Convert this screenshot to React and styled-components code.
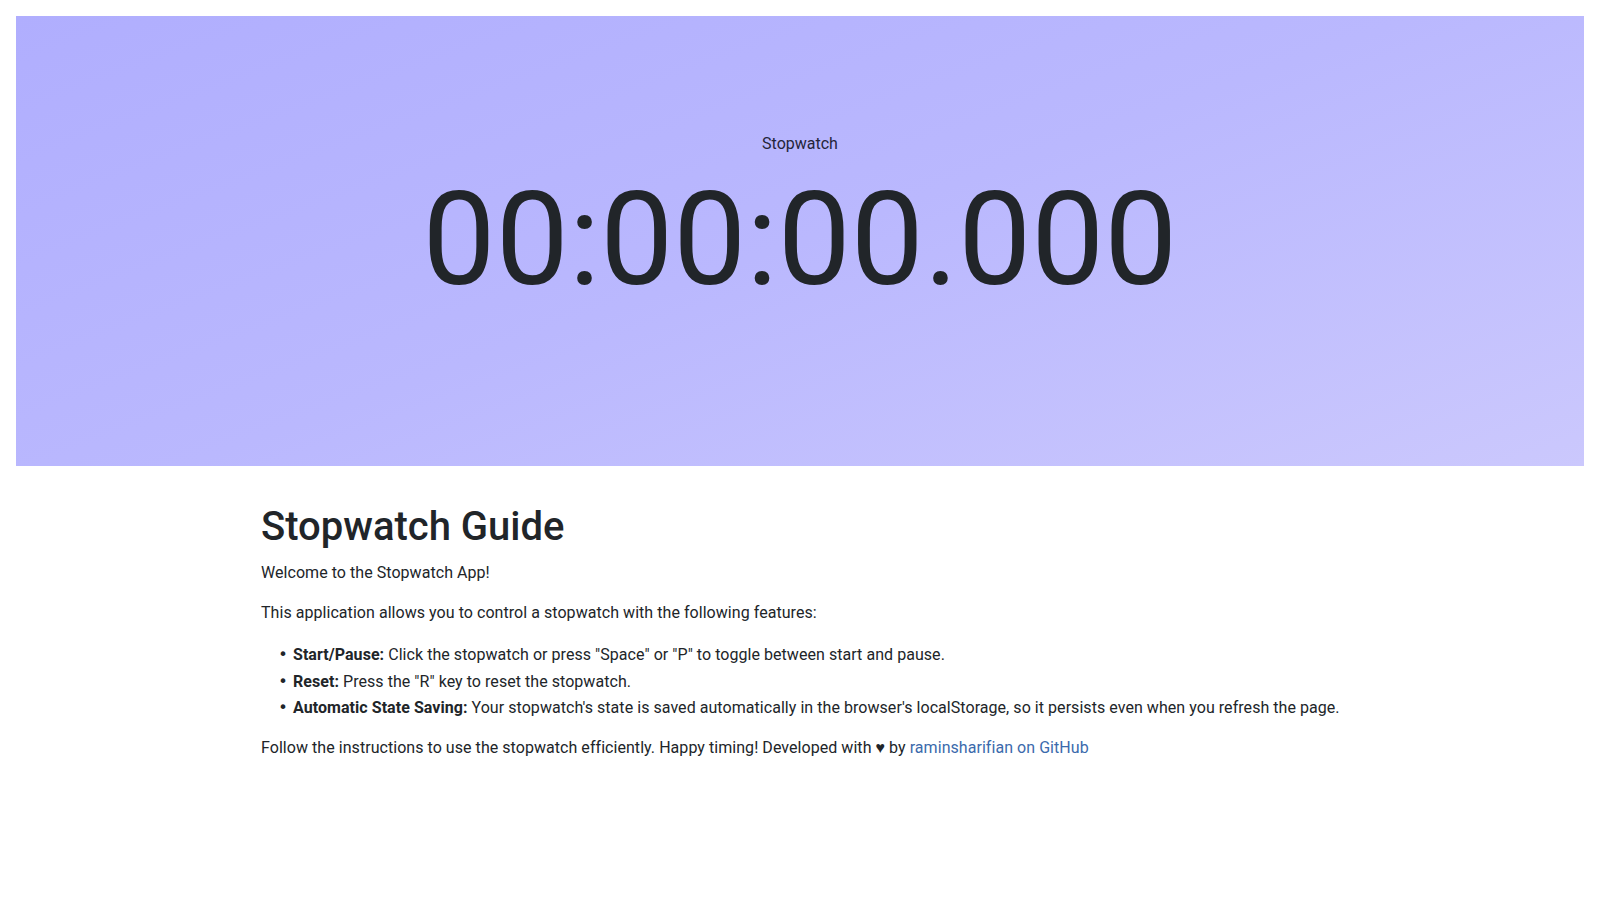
import React from 'react';
import styled, { createGlobalStyle } from 'styled-components';

const GlobalStyle = createGlobalStyle`
  * {
    box-sizing: border-box;
  }

  body {
    margin: 0;
    background: #fff;
    color: #212529;
    font-family: Roboto, "Noto Sans", "Liberation Sans", sans-serif;
    font-size: 16px;
    line-height: 1.5;
  }
`;

const Page = styled.div`
  padding: 16px;
`;

const Hero = styled.section`
  height: 450px;
  padding-top: 116px;
  display: flex;
  flex-direction: column;
  align-items: center;
  background: linear-gradient(160deg, #b0aefe 0%, #bab8fe 50%, #cbc8fd 100%);
  cursor: pointer;
  user-select: none;
`;

const Label = styled.div`
  font-size: 16px;
  line-height: 24px;
  margin-bottom: 6px;
  color: #25253a;
`;

const Timer = styled.div`
  font-size: 130px;
  line-height: 1.2;
  font-weight: 400;
  color: #212529;
`;

const Guide = styled.main`
  max-width: 1110px;
  margin: 0 auto;
  padding: 37px 0 0 16px;
  letter-spacing: 0.05px;
`;

const Title = styled.h1`
  margin: 0 0 10px;
  font-size: 40px;
  font-weight: 500;
  line-height: 1.2;
  letter-spacing: 0;
`;

const Text = styled.p`
  margin: 0 0 16px;
`;

const Features = styled.ul`
  margin: 0 0 16px;
  padding: 2px 0 0 32px;
`;

const Feature = styled.li`
  line-height: 24px;

  & + & {
    margin-top: 2.5px;
  }

  &::marker {
    content: '\\2022\\2004';
    font-family: "DejaVu Sans", sans-serif;
  }
`;

const Link = styled.a`
  color: #3b6aac;
  text-decoration: none;
`;

const features = [
  ['Start/Pause:', 'Click the stopwatch or press "Space" or "P" to toggle between start and pause.'],
  ['Reset:', 'Press the "R" key to reset the stopwatch.'],
  [
    'Automatic State Saving:',
    "Your stopwatch's state is saved automatically in the browser's localStorage, so it persists even when you refresh the page.",
  ],
];

const App = () => {
  return (
    <>
      <GlobalStyle />
      <Page>
        <Hero>
          <Label>Stopwatch</Label>
          <Timer>00:00:00.000</Timer>
        </Hero>
        <Guide>
          <Title>Stopwatch Guide</Title>
          <Text>Welcome to the Stopwatch App!</Text>
          <Text>This application allows you to control a stopwatch with the following features:</Text>
          <Features>
            {features.map(([name, desc]) => (
              <Feature key={name}>
                <strong>{name}</strong> {desc}
              </Feature>
            ))}
          </Features>
          <Text>
            Follow the instructions to use the stopwatch efficiently. Happy timing! Developed with ♥ by{' '}
            <Link href="#">raminsharifian on GitHub</Link>
          </Text>
        </Guide>
      </Page>
    </>
  );
};

export default App;
